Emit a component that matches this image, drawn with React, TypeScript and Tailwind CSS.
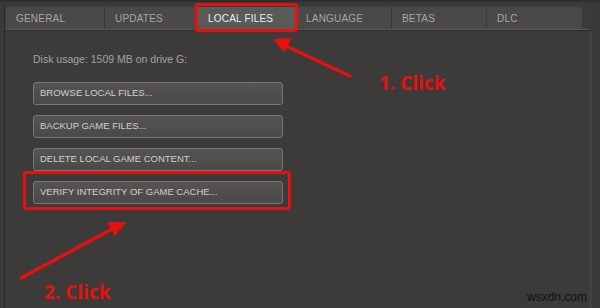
import React from 'react';

const tabs = [
    { label: 'GENERAL', w: 'w-[98px]' },
    { label: 'UPDATES', w: 'w-[92px]' },
    { label: 'LOCAL FILES', w: 'w-[97px]', active: true },
    { label: 'LANGUAGE', w: 'w-[95px]' },
    { label: 'BETAS', w: 'w-[94px]' },
    { label: 'DLC', w: 'w-[95px]' },
];

const actions = [
    'BROWSE LOCAL FILES...',
    'BACKUP GAME FILES...',
    'DELETE LOCAL GAME CONTENT...',
    'VERIFY INTEGRITY OF GAME CACHE...',
];

export default function App() {
    return (
        <div className="relative w-[600px] h-[308px] overflow-hidden bg-[#3b3a38] font-['Liberation_Sans',Arial,sans-serif]">
            {/* window frame */}
            <div className="h-full flex pt-[2px] pl-[4px] border-t-[2px] border-[#2f2e2c]">
                <div className="flex-1 flex flex-col border-l border-[#2c2b29] bg-[#3c3b39]">
                    {/* tabs */}
                    <div className="flex gap-px pt-[3px] pl-px">
                        {tabs.map((t) => (
                            <div
                                key={t.label}
                                className={`${t.w} h-[22px] flex items-center pl-[10px] text-[10px] tracking-[0.2px] ${
                                    t.active
                                        ? 'bg-[#5a5a58] text-[#ececec]'
                                        : 'bg-[#4a4947] text-[#a6a6a6]'
                                }`}
                            >
                                {t.label}
                            </div>
                        ))}
                    </div>
                    <div className="h-[2px] bg-[#5a5957] border-b border-[#2e2d2b]" />

                    {/* content */}
                    <div className="pl-[28px] pt-[21px]">
                        <div className="text-[10.5px] text-[#a3a3a3] leading-[14px]">
                            Disk usage: 1509 MB on drive G:
                        </div>
                        <div className="flex flex-col gap-[10px] mt-[16px] w-[250px]">
                            {actions.map((a) => (
                                <div
                                    key={a}
                                    className="h-[23px] flex items-center pl-[6px] rounded-[3px] border border-[#787775] bg-gradient-to-b from-[#555452] to-[#4a4947] text-[9.5px] text-[#cfcfcf]"
                                >
                                    {a}
                                </div>
                            ))}
                        </div>
                    </div>
                </div>
                {/* right edge band */}
                <div className="w-[11px] flex pt-[28px]">
                    <div className="w-[3px] bg-[#434240]" />
                    <div className="flex-1 bg-[#3a3937]" />
                </div>
            </div>

            {/* annotation boxes */}
            <div className="absolute left-[195px] top-[3px] w-[103px] h-[29px] border-[3px] border-[#e8100f] rounded-[3px]" />
            <div className="absolute left-[23px] top-[171px] w-[268px] h-[39px] border-[3px] border-[#e8100f] rounded-[3px]" />

            {/* arrows */}
            <svg className="absolute inset-0" width="600" height="308" viewBox="0 0 600 308">
                <line x1="350" y1="76" x2="286" y2="46" stroke="#e8100f" strokeWidth="3.5" strokeLinecap="round" />
                <polygon points="273,39 292,38 284,52" fill="#e8100f" />
                <line x1="21" y1="278" x2="112" y2="229" stroke="#e8100f" strokeWidth="3.5" strokeLinecap="round" />
                <polygon points="126,222 107,222 115,236" fill="#e8100f" />
            </svg>

            <div className="absolute left-[379px] top-[71px] text-[19px] font-bold text-[#e8100f] font-['Open_Sans',sans-serif] leading-[24px]">
                1. Click
            </div>
            <div className="absolute left-[44px] top-[280px] text-[19px] font-bold text-[#e8100f] font-['Open_Sans',sans-serif] leading-[24px]">
                2. Click
            </div>

            <div className="absolute left-[527px] top-[288px] text-[12px] text-[#111]">
                wsxdn.com
            </div>
        </div>
    );
}
